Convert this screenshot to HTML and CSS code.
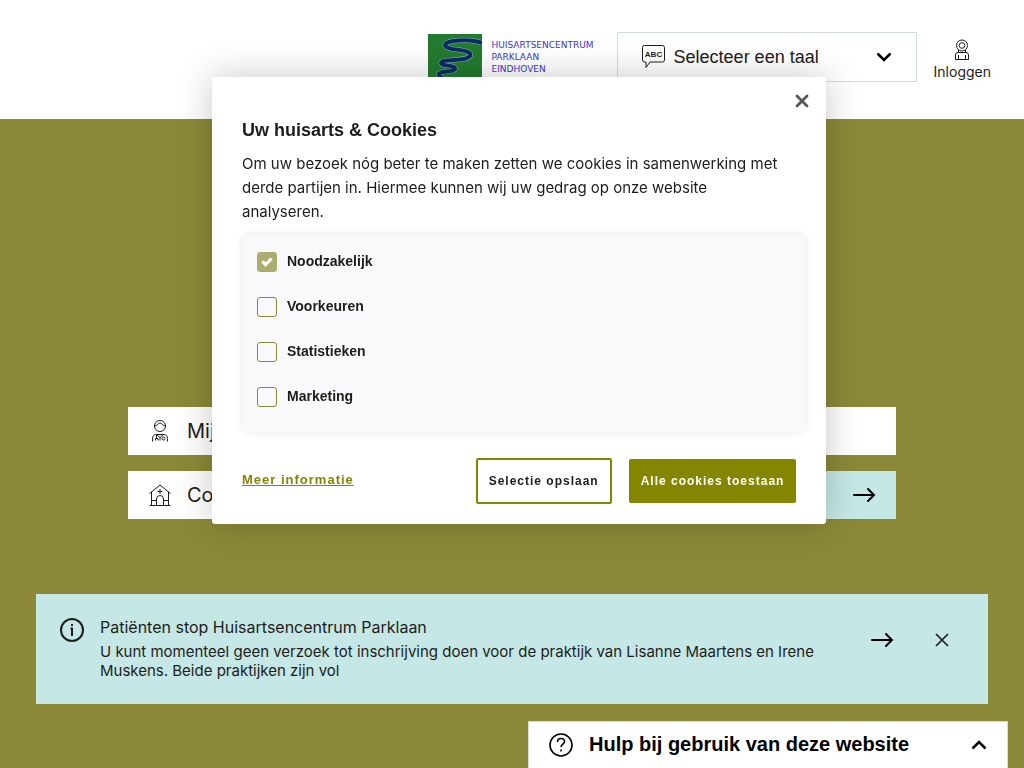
FILE: index.html
```html
<!DOCTYPE html>
<html lang="nl">
  <head>
    <meta charset="UTF-8" />
    <meta name="viewport" content="width=device-width, initial-scale=1.0" />
    <title>Huisartsencentrum Parklaan</title>
    <link rel="stylesheet" href="styles.css">
  </head>
  <body>
    <!-- Header -->
    <header class="header">
      <a class="logo" href="#">
        <svg class="logo-mark" viewBox="0 0 54 66" aria-hidden="true">
          <rect width="54" height="66" fill="#237b2f" />
          <path d="M54 9 C46 6 34 6 25 7 C14 9 15 13 24 15 C33 16 44 17 42 22 C38 28 14 24 13 29 C13 32 28 31 27 35 C25 39 10 36 11 41 C12 45 20 45 22 52" fill="none" stroke="#8fb9a5" stroke-width="5" />
          <path d="M54 9 C46 6 34 6 25 7 C14 9 15 13 24 15 C33 16 44 17 42 22 C38 28 14 24 13 29 C13 32 28 31 27 35 C25 39 10 36 11 41 C12 45 20 45 22 52" fill="none" stroke="#0b2a68" stroke-width="4" />
        </svg>
        <span class="logo-text">HUISARTSENCENTRUM<br>PARKLAAN<br>EINDHOVEN</span>
      </a>

      <div class="language">
        <svg class="language-icon" viewBox="0 0 24 24" aria-hidden="true">
          <path d="M2.500 .5h18a2 2 0 0 1 2 2v12.500a2 2 0 0 1-2 2H8L4 22.500V17H2.500a2 2 0 0 1-2-2V2.500a2 2 0 0 1 2-2z" />
          <text x="11.500" y="12" text-anchor="middle">ABC</text>
        </svg>
        <select class="language-select" aria-label="Taal">
          <option>Selecteer een taal</option>
        </select>
        <svg class="chevron" viewBox="0 0 16 10" aria-hidden="true">
          <path d="M1.500 1.500 8 8l6.500-6.500" />
        </svg>
      </div>

      <a class="login" href="#">
        <svg class="login-icon" viewBox="0 0 16 22" aria-hidden="true">
          <circle cx="8" cy="6.500" r="5.500" />
          <circle cx="8" cy="6.500" r="2.800" />
          <path d="M4.500 11v2.500M11.500 11v2.500M1.500 20.500V16a2.500 2.500 0 0 1 2.500-2.500h8a2.500 2.500 0 0 1 2.500 2.500v4.500zM4.500 16v4.500M11.500 16v4.500" />
        </svg>
        <span>Inloggen</span>
      </a>
    </header>

    <main class="hero">
      <!-- Menu -->
      <nav class="menu">
        <a class="menu-item" href="#">
          <svg class="menu-icon" viewBox="0 0 24 24" aria-hidden="true">
            <circle cx="12" cy="7" r="5.500" />
            <path d="M6.500 7c3-.5 4-3 5.500-3s2.500 2.500 5.500 3M4.500 22.500v-3c0-2.500 1.500-4 4-4h7c2.500 0 4 1.500 4 4v3M8.500 15.500l3.500 3 3.500-3M8.500 16v3M7.500 21.500v-2h2.500v2M12 18.500v3" />
            <circle cx="15.500" cy="19.500" r="1.500" />
          </svg>
          <span class="menu-label">Mijn</span>
        </a>
        <a class="menu-item" href="#">
          <svg class="menu-icon" viewBox="0 0 24 24" aria-hidden="true">
            <path d="M1.500 10.500 12 2l10.500 8.500M3.500 9v13.500h17V9M1.500 22.500h21M12 6v5M9.500 8.500h5M8.500 22v-6a3.500 3.500 0 0 1 7 0v6M3.500 17.500h5M15.500 17.500h5" />
          </svg>
          <span class="menu-label">Contact</span>
          <span class="menu-go">
            <svg class="arrow" viewBox="0 0 24 16" aria-hidden="true">
              <path d="M2 8h20M16 2l6 6-6 6" />
            </svg>
          </span>
        </a>
      </nav>

      <!-- Melding -->
      <section class="notice">
        <svg class="info-icon" viewBox="0 0 24 24" aria-hidden="true">
          <circle cx="12" cy="12" r="11" />
          <path d="M10.500 10.500H12V18M12 6v2" />
        </svg>
        <div class="notice-text">
          <h2>Patiënten stop Huisartsencentrum Parklaan</h2>
          <p>U kunt momenteel geen verzoek tot inschrijving doen voor de praktijk van Lisanne Maartens en Irene Muskens. Beide praktijken zijn vol</p>
        </div>
        <a class="notice-link" href="#" aria-label="Lees meer">
          <svg class="arrow" viewBox="0 0 24 16" aria-hidden="true">
            <path d="M2 8h20M16 2l6 6-6 6" />
          </svg>
        </a>
        <button class="icon-button" type="button" aria-label="Melding sluiten">
          <svg class="notice-close" viewBox="0 0 14 14" aria-hidden="true">
            <path d="M1 1l12 12M13 1 1 13" />
          </svg>
        </button>
      </section>
    </main>

    <!-- Help -->
    <button class="help" type="button">
      <svg class="help-icon" viewBox="0 0 24 24" aria-hidden="true">
        <circle cx="12" cy="12" r="11" />
        <path d="M8.500 9c0-2 1.500-3.500 3.500-3.500s3.500 1.300 3.500 3.200c0 2.500-3.500 2.300-3.500 5.300M12 16.500v2" />
      </svg>
      <span class="help-label">Hulp bij gebruik van deze website</span>
      <svg class="chevron" viewBox="0 0 16 10" aria-hidden="true">
        <path d="M1.500 8.500 8 2l6.500 6.500" />
      </svg>
    </button>

    <!-- Cookies -->
    <form class="cookies" role="dialog" aria-labelledby="cookies-title">
      <button class="icon-button cookies-close" type="button" aria-label="Sluiten">
        <svg viewBox="0 0 14 14" aria-hidden="true">
          <path d="M2 2l10 10M12 2 2 12" />
        </svg>
      </button>
      <h1 id="cookies-title">Uw huisarts &amp; Cookies</h1>
      <p class="cookies-text">Om uw bezoek nóg beter te maken zetten we cookies in samenwerking met derde partijen in. Hiermee kunnen wij uw gedrag op onze website analyseren.</p>

      <div class="options">
        <label class="option"><input type="checkbox" checked disabled />Noodzakelijk</label>
        <label class="option"><input type="checkbox" />Voorkeuren</label>
        <label class="option"><input type="checkbox" />Statistieken</label>
        <label class="option"><input type="checkbox" />Marketing</label>
      </div>

      <div class="cookies-footer">
        <a class="more" href="#">Meer informatie</a>
        <button class="button button-outline" type="button">Selectie opslaan</button>
        <button class="button" type="submit">Alle cookies toestaan</button>
      </div>
    </form>
  </body>
</html>
```

FILE: styles.css
```css
* {
  box-sizing: border-box;
}

body {
  margin: 0;
  min-height: 100vh;
  background: #8b8937;
  color: #1d1d1b;
  font-family: Inter, "Liberation Sans", sans-serif;
  font-size: 15px;
}

a {
  color: inherit;
  text-decoration: none;
}

h1,
h2,
p {
  margin: 0;
}

svg {
  display: block;
  flex: none;
  fill: none;
  stroke: #1d1d1b;
}

/* Header */
.header {
  display: flex;
  justify-content: flex-end;
  align-items: flex-start;
  gap: 17px;
  padding: 32px 33px 0 0;
  height: 119px;
  background: #fff;
}

.logo {
  display: flex;
  gap: 9px;
  padding-top: 2px;
  margin-right: 6px;
}

.logo-mark {
  width: 54px;
  height: 66px;
  stroke: none;
}

.logo-text {
  padding-top: 5px;
  color: #3a36d0;
  font-family: "DejaVu Sans", sans-serif;
  font-size: 9px;
  line-height: 12px;
}

.language {
  display: flex;
  align-items: center;
  width: 300px;
  height: 50px;
  padding: 0 24px;
  border: 1px solid #d0dedb;
}

.language-icon {
  width: 24px;
  height: 24px;
}

.language-icon text {
  fill: #1d1d1b;
  stroke: none;
  font-family: "Liberation Sans", sans-serif;
  font-size: 8px;
  font-weight: bold;
}

.language-select {
  flex: 1;
  appearance: none;
  padding: 0 8px;
  border: none;
  background: none;
  color: #1d1d1b;
  font-family: "Liberation Sans", sans-serif;
  font-size: 18px;
}

.chevron {
  width: 16px;
  height: 10px;
  stroke: #000;
  stroke-width: 2.5;
}

.login {
  display: flex;
  flex-direction: column;
  align-items: center;
  padding-top: 7px;
  font-size: 14px;
  line-height: 22px;
}

.login-icon {
  width: 16px;
  height: 22px;
}

/* Menu */
.hero {
  padding: 288px 36px 64px;
}

.menu {
  display: flex;
  flex-direction: column;
  gap: 16px;
  margin: 0 92px 75px;
}

.menu-item {
  display: flex;
  align-items: center;
  height: 48px;
  padding-left: 20px;
  background: #fff;
}

.menu-icon {
  width: 24px;
  height: 24px;
}

.menu-label {
  flex: 1;
  padding-left: 15px;
  font-size: 20px;
}

.menu-go {
  display: flex;
  align-items: center;
  justify-content: flex-end;
  width: 80px;
  height: 48px;
  padding-right: 20px;
  background: #c5e7e5;
}

.arrow {
  width: 24px;
  height: 16px;
  stroke: #000;
  stroke-width: 2;
  stroke-linecap: round;
}

/* Melding */
.notice {
  display: flex;
  align-items: flex-start;
  padding: 24px 36px 24px 24px;
  background: #c5e7e5;
}

.info-icon {
  width: 24px;
  height: 24px;
  stroke-width: 2;
}

.notice-text {
  flex: 1;
  padding: 0 32px 0 16px;
}

.notice-text h2 {
  margin-bottom: 6px;
  font-size: 16px;
  font-weight: normal;
  line-height: 18px;
}

.notice-text p {
  line-height: 19px;
}

.notice-link {
  align-self: center;
  margin-bottom: 18px;
}

.icon-button {
  padding: 0;
  border: none;
  background: none;
  cursor: pointer;
}

.notice .icon-button {
  align-self: center;
  margin: 0 3px 18px 41px;
}

.notice-close {
  width: 14px;
  height: 14px;
  stroke-width: 1.7;
}

/* Help */
.help {
  position: fixed;
  right: 16px;
  bottom: 0;
  display: flex;
  align-items: center;
  width: 480px;
  height: 47px;
  padding: 0 20px;
  border: 1px solid #d0dedb;
  border-bottom: none;
  background: #fff;
  color: #000;
  text-align: left;
  cursor: pointer;
}

.help-icon {
  width: 24px;
  height: 24px;
  stroke: #000;
  stroke-width: 1.6;
}

.help-label {
  flex: 1;
  padding: 0 0 2px 16px;
  font-family: "Liberation Sans", sans-serif;
  font-size: 20px;
  font-weight: bold;
}

/* Cookies */
.cookies {
  position: fixed;
  top: 77px;
  left: 212px;
  width: 60%;
  padding: 42px 20px 20px 30px;
  border-radius: 3px;
  background: #fff;
  box-shadow: 0 0 36px rgba(0, 0, 0, 0.22);
}

.cookies-close {
  position: absolute;
  top: 17px;
  right: 17px;
}

.cookies-close svg {
  width: 14px;
  height: 14px;
  stroke: #565656;
  stroke-width: 2.8;
  stroke-linecap: round;
}

.cookies h1 {
  margin-bottom: 11px;
  font-family: "Liberation Sans", sans-serif;
  font-size: 18px;
  line-height: 22px;
}

.cookies-text {
  padding-right: 20px;
  line-height: 24px;
}

.options {
  display: flex;
  flex-direction: column;
  gap: 25px;
  margin-top: 10px;
  padding: 18px 15px 26px;
  border-radius: 8px;
  background: #f9f9fb;
  box-shadow: 0 0 6px rgba(0, 0, 0, 0.1);
}

.option {
  display: flex;
  align-items: flex-start;
  gap: 10px;
  font-family: "Liberation Sans", sans-serif;
  font-size: 14px;
  font-weight: bold;
  line-height: 18px;
}

.option input {
  appearance: none;
  width: 20px;
  height: 20px;
  margin: 0;
  border: 1px solid #8b8937;
  border-radius: 3px;
}

.option input:checked {
  display: flex;
  justify-content: center;
  border-color: #adac71;
  background: #adac71;
}

.option input:checked::before {
  content: "";
  width: 3px;
  height: 7px;
  margin-top: 3px;
  border: solid #fff;
  border-width: 0 3px 3px 0;
  transform: rotate(45deg);
}

.cookies-footer {
  display: flex;
  align-items: center;
  gap: 17px;
  margin-top: 25px;
  padding-right: 10px;
}

.more {
  flex: 1;
  padding-bottom: 4px;
  color: #858600;
  font-family: "Liberation Sans", sans-serif;
  font-size: 13px;
  font-weight: bold;
  letter-spacing: 1px;
  text-decoration: underline;
}

.button {
  height: 44px;
  padding: 0 12px;
  border: none;
  border-radius: 2px;
  background: #858600;
  color: #fff;
  font-family: "Liberation Sans", sans-serif;
  font-size: 12px;
  font-weight: bold;
  letter-spacing: 1px;
  cursor: pointer;
}

.button-outline {
  height: 46px;
  padding: 0 11px;
  border: 2px solid #858600;
  background: #fff;
  color: #1d1d1b;
}
```
